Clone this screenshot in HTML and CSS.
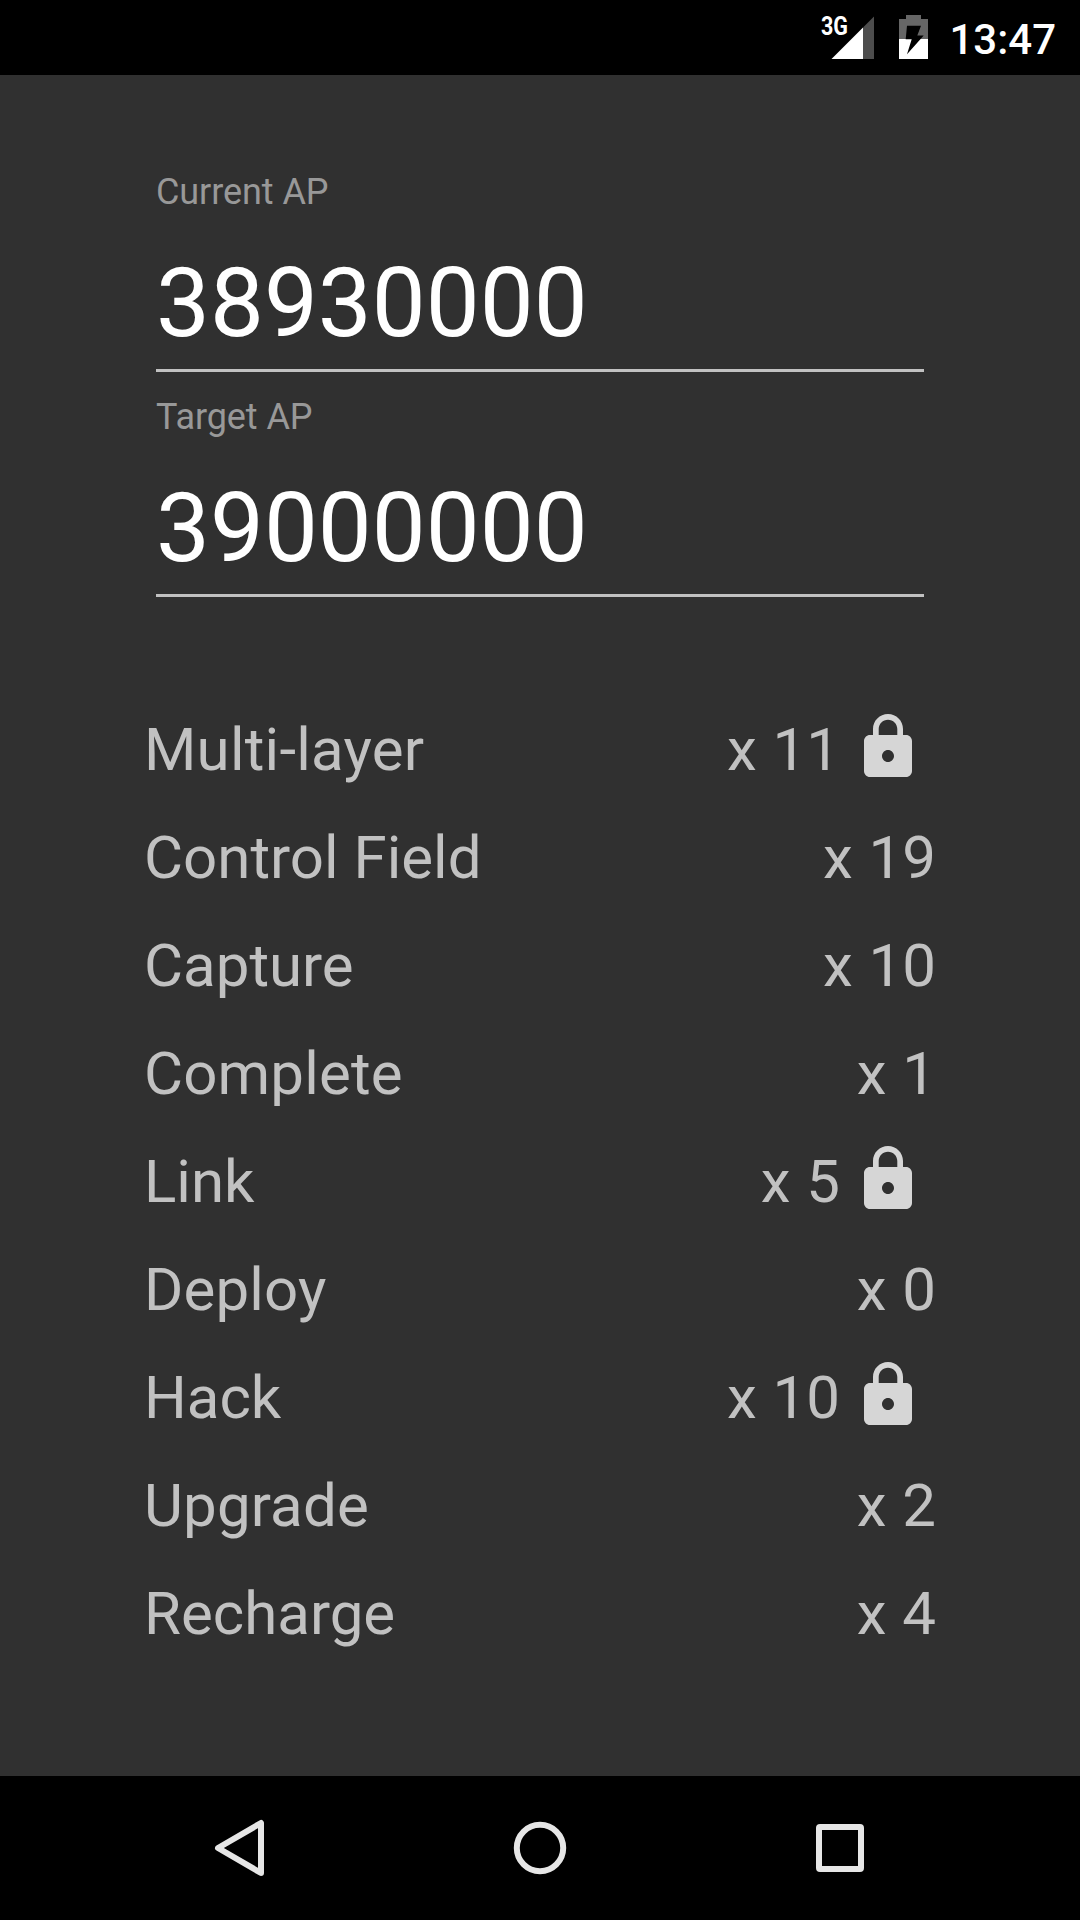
FILE: index.html
```html
<!DOCTYPE html>
<html lang="en">
<head>
<meta charset="utf-8">
<title>AP calculator</title>
<link rel="stylesheet" href="styles.css">
</head>
<body>
<header class="status">
  <svg class="signal" width="54" height="56" viewBox="0 -10 54 56">
    <path d="M42 12.500L53 1.500V44H42z" fill="#4d4d4d"/><path d="M10.500 44L42 12.500V44z" fill="#fff"/>
    <text class="network" x="0" y="20" textLength="27" lengthAdjust="spacingAndGlyphs">3G</text>
  </svg>
  <svg class="battery" width="30" height="46" viewBox="0 0 30 46">
    <path d="M7 0h15v4h7v20H0V4h7z" fill="#666"/><path d="M0 24h29v20H0z" fill="#fff"/><path d="M8 10.700H22L18.300 20.500H24.700L8 39.300L12.700 24.300H6.700z" fill="#000"/>
  </svg>
  <span class="clock">13:47</span>
</header>
<main class="content">
  <section class="fields">
    <div class="field"><label class="label">Current AP</label><div class="value">38930000</div></div>
    <div class="field"><label class="label">Target AP</label><div class="value">39000000</div></div>
  </section>
  <section class="actions">
    <div class="row"><span class="name wider">Multi-layer</span><span class="count">x 11</span><svg class="lock" viewBox="0 0 24 24"><use href="#lock"/></svg></div>
    <div class="row"><span class="name">Control Field</span><span class="count">x 19</span></div>
    <div class="row"><span class="name">Capture</span><span class="count">x 10</span></div>
    <div class="row"><span class="name wide">Complete</span><span class="count">x 1</span></div>
    <div class="row"><span class="name">Link</span><span class="count">x 5</span><svg class="lock" viewBox="0 0 24 24"><use href="#lock"/></svg></div>
    <div class="row"><span class="name wide">Deploy</span><span class="count">x 0</span></div>
    <div class="row"><span class="name">Hack</span><span class="count">x 10</span><svg class="lock" viewBox="0 0 24 24"><use href="#lock"/></svg></div>
    <div class="row"><span class="name wide">Upgrade</span><span class="count">x 2</span></div>
    <div class="row"><span class="name">Recharge</span><span class="count">x 4</span></div>
  </section>
</main>
<nav class="nav">
  <svg width="60" height="60" viewBox="0 0 60 60"><path d="M51 5V55L8 30z"/></svg>
  <svg width="60" height="60" viewBox="0 0 60 60"><circle cx="30" cy="30" r="23.200"/></svg>
  <svg width="60" height="60" viewBox="0 0 60 60"><rect x="9" y="9" width="42" height="42" rx="1"/></svg>
</nav>
<svg class="defs" width="0" height="0"><symbol id="lock" viewBox="0 0 24 24"><path d="M18 8h-1V6c0-2.760-2.240-5-5-5S7 3.240 7 6v2H6c-1.100 0-2 .9-2 2v10c0 1.100.9 2 2 2h12c1.100 0 2-.9 2-2V10c0-1.100-.9-2-2-2zm-6 9c-1.100 0-2-.9-2-2s.9-2 2-2 2 .9 2 2-.9 2-2 2zm3.100-9H8.900V6c0-1.710 1.390-3.100 3.100-3.100s3.100 1.390 3.100 3.100z"/></symbol></svg>
</body>
</html>
```
FILE: styles.css
```css
* { box-sizing: border-box; }
body { margin: 0; height: 1920px; display: flex; flex-direction: column; overflow: hidden; background: #303030; color: #c1c1c1; font-family: Roboto, sans-serif; }
.status { height: 75px; flex: none; background: #000; color: #fff; display: flex; justify-content: flex-end; align-items: flex-start; padding: 15px 24px 0 0; }
.signal { margin: -10px 24px 0 0; }
.battery { margin-right: 20px; }
.network { font-size: 25px; font-weight: 700; fill: #fff; }
.clock { width: 107px; text-align: right; font-size: 42px; font-weight: 500; line-height: 49px; }
.content { flex: 1; padding: 93px 144px 0; }
.fields { padding: 0 12px; }
.field { height: 225px; }
.label { display: block; font-size: 36px; line-height: 48px; letter-spacing: -0.08px; color: #989898; }
.value { height: 156px; padding-top: 31px; font-size: 96px; line-height: 112px; color: #fff; border-bottom: 3px solid #c1c1c1; }
.actions { padding-top: 78px; font-size: 60px; }
.row { height: 108px; line-height: 108px; display: flex; align-items: center; }
.name { flex: 1; }
.wide { letter-spacing: 0.16px; }
.wider { letter-spacing: 0.23px; }
.count { word-spacing: 1px; }
.lock { width: 72px; height: 72px; margin: -6px 12px 0; fill: #d6d6d6; }
.nav { height: 144px; background: #000; display: flex; justify-content: center; align-items: center; gap: 240px; }
.nav svg { fill: none; stroke: #e6e6e6; stroke-width: 6; stroke-linejoin: round; }
.defs { position: absolute; }
```
